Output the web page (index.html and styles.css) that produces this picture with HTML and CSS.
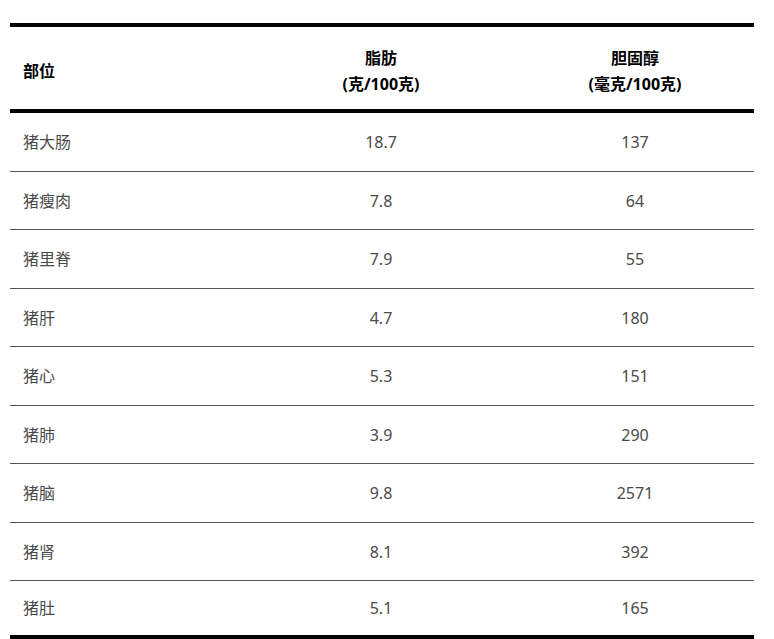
FILE: index.html
```html
<!DOCTYPE html>
<html lang="zh">
<head>
<meta charset="utf-8">
<title>猪各部位脂肪与胆固醇含量</title>
<link rel="stylesheet" href="styles.css">
</head>
<body>
<table class="data">
  <thead>
    <tr>
      <th class="c-part">部位</th>
      <th class="c-num">脂肪<br>(克/100克)</th>
      <th class="c-num">胆固醇<br>(毫克/100克)</th>
    </tr>
  </thead>
  <tbody>
    <tr><td class="c-part">猪大肠</td><td class="c-num">18.7</td><td class="c-num">137</td></tr>
    <tr><td class="c-part">猪瘦肉</td><td class="c-num">7.8</td><td class="c-num">64</td></tr>
    <tr><td class="c-part">猪里脊</td><td class="c-num">7.9</td><td class="c-num">55</td></tr>
    <tr><td class="c-part">猪肝</td><td class="c-num">4.7</td><td class="c-num">180</td></tr>
    <tr><td class="c-part">猪心</td><td class="c-num">5.3</td><td class="c-num">151</td></tr>
    <tr><td class="c-part">猪肺</td><td class="c-num">3.9</td><td class="c-num">290</td></tr>
    <tr><td class="c-part">猪脑</td><td class="c-num">9.8</td><td class="c-num">2571</td></tr>
    <tr><td class="c-part">猪肾</td><td class="c-num">8.1</td><td class="c-num">392</td></tr>
    <tr class="last"><td class="c-part">猪肚</td><td class="c-num">5.1</td><td class="c-num">165</td></tr>
  </tbody>
</table>
</body>
</html>
```
FILE: styles.css
```css
html, body {
  margin: 0;
  padding: 0;
  background: #fff;
}
body {
  font-family: "Noto Sans", "Noto Sans CJK SC", sans-serif;
  font-size: 16px;
  color: #4a4a4a;
}
.data {
  margin: 23px 0 0 10px;
  width: 744px;
  border-collapse: separate;
  border-spacing: 0;
  border-top: 4px solid #000;
  table-layout: fixed;
}
.data th {
  font-weight: bold;
  color: #000;
  line-height: 26px;
  height: 86px;
  padding: 5px 0 0;
  box-sizing: border-box;
  border-bottom: 4px solid #000;
  vertical-align: middle;
}
.data td {
  height: 59px;
  box-sizing: border-box;
  padding: 0;
  line-height: 24px;
  border-bottom: 1px solid #555;
  vertical-align: middle;
}
.data tbody tr:nth-child(even) td {
  height: 58px;
}
.data tbody tr.last td {
  height: 58px;
  border-bottom: 4px solid #000;
}
.c-part {
  text-align: left;
  padding-left: 13px !important;
  width: 236px;
}
.c-num {
  text-align: center;
}
thead .c-num:nth-child(2) { width: 270px; }
thead .c-num:nth-child(3) { width: 238px; }
```
